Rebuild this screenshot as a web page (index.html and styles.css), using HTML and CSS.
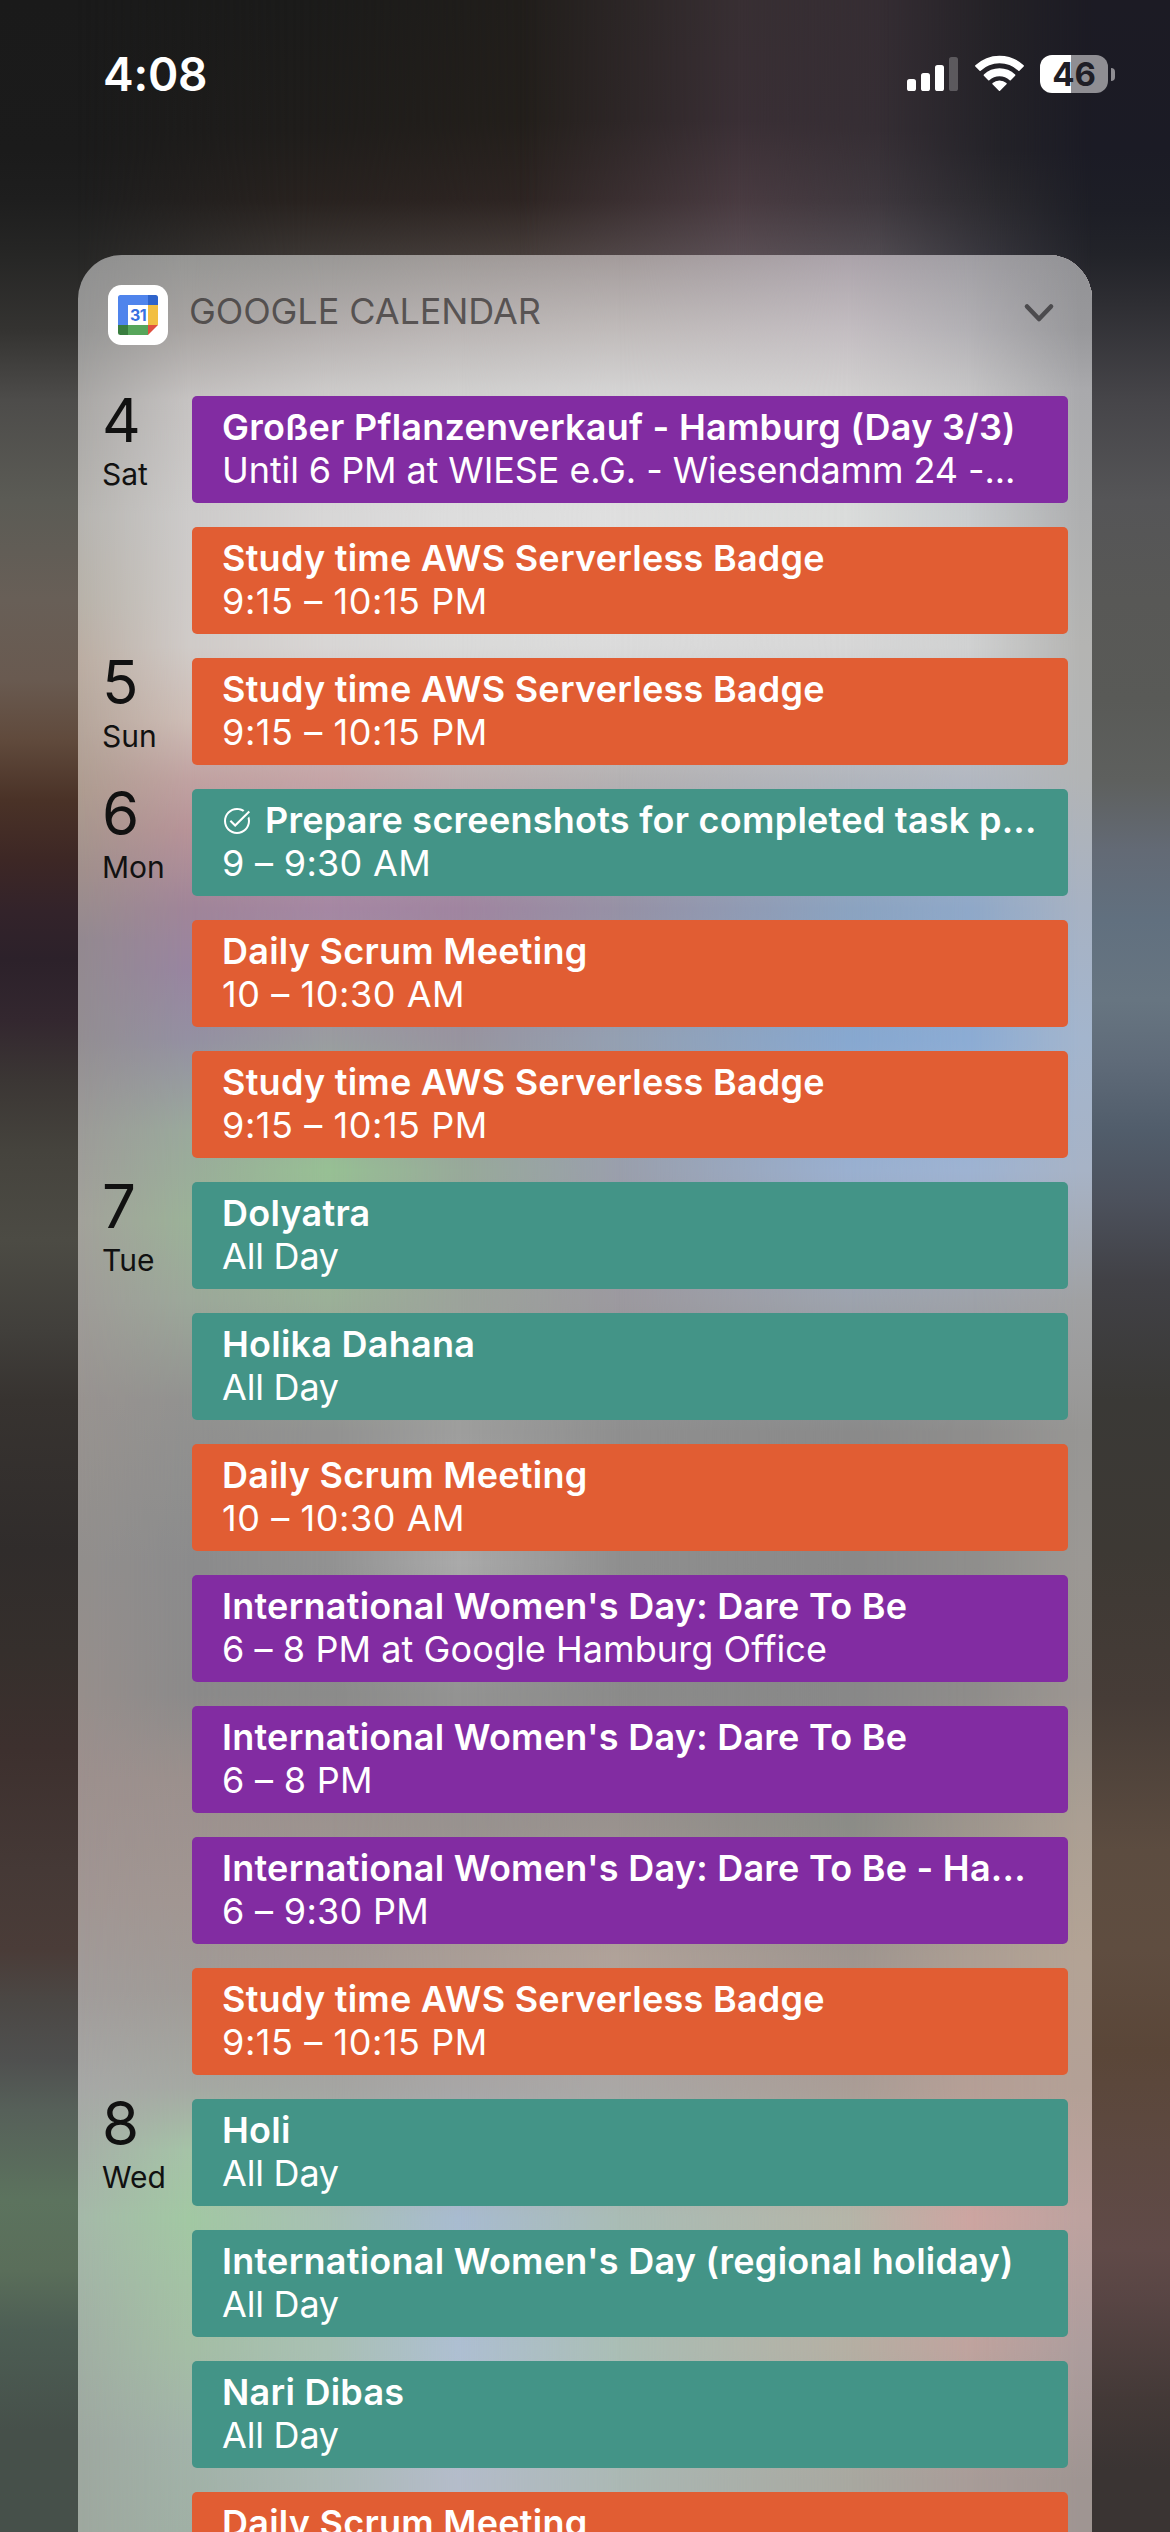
FILE: index.html
```html
<!DOCTYPE html>
<html lang="en">
<head>
<meta charset="utf-8">
<title>Google Calendar widget</title>
<link rel="stylesheet" href="styles.css">
</head>
<body>
<div class="screen">
  <div class="wash" aria-hidden="true">
    <i class="w0"></i><i class="w1"></i><i class="w2"></i><i class="w3"></i><i class="w4"></i><i class="w5"></i><i class="w6"></i>
  </div>

  <header class="status">
    <span class="clock">4:08</span>
    <div class="indicators">
      <svg class="signal" width="51" height="34" viewBox="0 0 51 34" fill="#fff">
        <rect x="0" y="22" width="9" height="12" rx="2.6"/>
        <rect x="14" y="16" width="9" height="18" rx="2.6"/>
        <rect x="28" y="8" width="9" height="26" rx="2.6"/>
        <rect x="42" y="0" width="9" height="34" rx="2.6" opacity=".24"/>
      </svg>
      <svg class="wifi" width="49" height="36" viewBox="0 0 49 36" fill="#fff" stroke="#fff" stroke-linejoin="round" stroke-width="1.6">
        <path d="M.9 10.9A34.2 34.2 0 0 1 48.1 10.9L43.9 15.2A28.2 28.2 0 0 0 5.1 15.2Z"/>
        <path d="M9.4 20.2A21.8 21.8 0 0 1 39.6 20.2L35.2 24.6A15.6 15.6 0 0 0 13.8 24.6Z"/>
        <path d="M18.1 28.7A9.6 9.6 0 0 1 30.9 28.7L24.5 35.2Z"/>
      </svg>
      <div class="battery"><span class="cell">46</span><span class="nub"></span></div>
    </div>
  </header>

  <main class="widget">
    <div class="wash panel-wash" aria-hidden="true">
      <i class="p0"></i><i class="p1"></i><i class="p2"></i><i class="p3"></i><i class="p4"></i><i class="p5"></i><i class="p6"></i><i class="p7"></i>
    </div>
    <div class="widget-head">
      <svg class="app-icon" width="60" height="60" viewBox="0 0 60 60">
        <rect width="60" height="60" rx="13.5" fill="#fff"/>
        <path d="M10 40V12.500Q10 10 12.500 10H40V20H20V40Z" fill="#4f84ec"/>
        <path d="M40 10H47.500Q50 10 50 12.500V20H40Z" fill="#2f64cb"/>
        <path d="M40 20H50V40H40Z" fill="#f2bf42"/>
        <path d="M20 40H40V50H20Z" fill="#57a65b"/>
        <path d="M10 40H20V50H12.500Q10 50 10 47.500Z" fill="#397e3f"/>
        <path d="M40 40H50L40 50Z" fill="#df4f3f"/>
        <text x="30" y="35.800" text-anchor="middle" class="icon-date">31</text>
      </svg>
      <h1>GOOGLE CALENDAR</h1>
      <svg class="chevron" width="32" height="22" viewBox="0 0 32 22"><path d="M4 4.500L16 17L28 4.500"/></svg>
    </div>

    <section class="day">
      <div class="date"><b>4</b><span>Sat</span></div>
      <ul>
        <li class="purple"><h2>Großer Pflanzenverkauf - Hamburg (Day 3/3)</h2><p class="place">Until 6 PM at WIESE e.G. - Wiesendamm 24 -...</p></li>
        <li class="orange"><h2>Study time AWS Serverless Badge</h2><p class="range">9:15 – 10:15 PM</p></li>
      </ul>
    </section>
    <section class="day">
      <div class="date"><b>5</b><span>Sun</span></div>
      <ul>
        <li class="orange"><h2>Study time AWS Serverless Badge</h2><p class="range">9:15 – 10:15 PM</p></li>
      </ul>
    </section>
    <section class="day">
      <div class="date"><b>6</b><span>Mon</span></div>
      <ul>
        <li class="teal">
          <h2 class="task"><svg width="26" height="26" viewBox="2 2 20 20"><path fill="#fff" d="M22 5.180 10.590 16.600l-4.240-4.240 1.100-1.100 3.140 3.140 10.300-10.300zM20.130 9.870c.2.680.32 1.390.32 2.130 0 4.670-3.780 8.450-8.450 8.450s-8.450-3.780-8.450-8.450 3.780-8.450 8.450-8.450c1.700 0 3.280.5 4.600 1.360l1.120-1.100C16.100 2.670 14.130 2 12 2 6.480 2 2 6.480 2 12s4.480 10 10 10 10-4.480 10-10c0-1.190-.22-2.330-.6-3.390z"/></svg>Prepare screenshots for completed task p...</h2>
          <p class="time">9 – 9:30 AM</p>
        </li>
        <li class="orange"><h2>Daily Scrum Meeting</h2><p class="range">10 – 10:30 AM</p></li>
        <li class="orange"><h2>Study time AWS Serverless Badge</h2><p class="range">9:15 – 10:15 PM</p></li>
      </ul>
    </section>
    <section class="day">
      <div class="date"><b>7</b><span>Tue</span></div>
      <ul>
        <li class="teal"><h2>Dolyatra</h2><p class="all-day">All Day</p></li>
        <li class="teal"><h2>Holika Dahana</h2><p class="all-day">All Day</p></li>
        <li class="orange"><h2>Daily Scrum Meeting</h2><p class="range">10 – 10:30 AM</p></li>
        <li class="purple"><h2>International Women's Day: Dare To Be</h2><p>6 – 8 PM at Google Hamburg Office</p></li>
        <li class="purple"><h2>International Women's Day: Dare To Be</h2><p class="time">6 – 8 PM</p></li>
        <li class="purple"><h2>International Women's Day: Dare To Be - Ha...</h2><p class="time">6 – 9:30 PM</p></li>
        <li class="orange"><h2>Study time AWS Serverless Badge</h2><p class="range">9:15 – 10:15 PM</p></li>
      </ul>
    </section>
    <section class="day">
      <div class="date"><b>8</b><span>Wed</span></div>
      <ul>
        <li class="teal"><h2>Holi</h2><p class="all-day">All Day</p></li>
        <li class="teal"><h2>International Women's Day (regional holiday)</h2><p class="all-day">All Day</p></li>
        <li class="teal"><h2>Nari Dibas</h2><p class="all-day">All Day</p></li>
        <li class="orange"><h2>Daily Scrum Meeting</h2></li>
      </ul>
    </section>
  </main>
</div>
</body>
</html>
```
FILE: styles.css
```css
* { box-sizing: border-box; margin: 0; padding: 0; }

html, body { width: 1170px; height: 2532px; overflow: hidden; }

body { font-family: Inter, "Liberation Sans", sans-serif; background: #1a1a1a; }

.screen { position: relative; width: 1170px; height: 2532px; overflow: hidden; isolation: isolate; }

/* Blurred wallpaper: vertical gradients cross-faded from left to right. */
.wash { position: absolute; inset: 0; z-index: -1; display: grid; }
.wash i { grid-area: 1 / 1; -webkit-mask-image: linear-gradient(to right, transparent var(--from), #000 var(--to)); mask-image: linear-gradient(to right, transparent var(--from), #000 var(--to)); }
.wash .w0, .wash .p0 { -webkit-mask-image: none; mask-image: none; }

.w0 { background: linear-gradient(#1a1a1a 0, #1b1b1b 150px, #1e1e1e 200px, #262625 255px, #343331 330px, #4d4c4a 400px, #5b5b55 500px, #685f57 600px, #695a50 680px, #604a3c 740px, #4a3227 800px, #3d2725 860px, #33232a 910px, #2c212a 960px, #33272f 1020px, #3b3634 1080px, #45433d 1150px, #4c4b44 1240px, #413f3b 1330px, #373330 1400px, #302c2b 1550px, #352f2c 1650px, #3d302e 1750px, #453936 1870px, #4a3c38 1950px, #4b4744 2000px, #4f504f 2060px, #566059 2110px, #5c735e 2200px, #5a6e5a 2270px, #4d5e54 2330px, #46504a 2430px, #46504a 2532px); }
.w1 { --from: 78px; --to: 300px; background: linear-gradient(#1b1b1a 0, #1f1d1b 130px, #28221f 200px, #3b3633 255px, #3b3633); }
.w2 { --from: 300px; --to: 540px; background: linear-gradient(#211e1b 0, #231f1b 120px, #2e2523 200px, #473e3b 255px, #473e3b); }
.w3 { --from: 520px; --to: 740px; background: linear-gradient(#382f33 0, #3a2f35 120px, #493b41 200px, #5a4e54 255px, #5a4e54); }
.w4 { --from: 740px; --to: 890px; background: linear-gradient(#352d33 0, #352e34 130px, #3d373d 200px, #4f4a50 255px, #4f4a50); }
.w5 { --from: 880px; --to: 1000px; background: linear-gradient(#232126 0, #232228 150px, #2a292e 200px, #34333a 255px, #34333a); }
.w6 { --from: 1000px; --to: 1092px; background: linear-gradient(#1c1b24 0, #1b1b25 150px, #1d1e26 210px, #222329 255px, #2d2d32 300px, #464549 400px, #555557 500px, #585856 600px, #595a57 700px, #5e605e 780px, #636a75 850px, #61707f 920px, #677581 1000px, #5f6b79 1060px, #515d6b 1130px, #4c515c 1200px, #414146 1280px, #3a3936 1400px, #3d3934 1550px, #463c37 1700px, #5c4c40 1850px, #5f4d40 1950px, #5a4638 2050px, #5d4941 2150px, #604a48 2250px, #584544 2300px, #433937 2400px, #3a3433 2470px, #3a3433); }

.status { display: flex; justify-content: space-between; align-items: center; height: 148px; padding: 0 55px 0 103px; }
.clock { color: #fff; font-size: 46px; font-weight: 600; letter-spacing: -.2px; }
.indicators { display: flex; align-items: flex-start; height: 38px; }
.signal { margin-top: 2px; }
.wifi { margin-left: 16.500px; }
.battery { display: flex; align-items: center; gap: 3px; margin-left: 16.500px; }
.cell { width: 68px; height: 38px; border-radius: 12px; background: linear-gradient(to right, #fff 31px, #8f8e93 31px); color: #1f1e26; font-size: 33px; line-height: 38px; font-weight: 700; text-align: center; }
.nub { width: 4px; height: 13px; border-radius: 0 5px 5px 0; background: #8f8e93; }

.widget { position: relative; isolation: isolate; width: 1014px; height: 2400px; margin: 107px 0 0 78px; border-radius: 44px 44px 0 0; overflow: hidden; }
.panel-wash { inset: auto; top: -255px; left: -78px; width: 1170px; height: 2532px; }

.p0 { background: linear-gradient(#8f8f8f 255px, #979796 330px, #a9a7a5 400px, #b6b4b0 515px, #b8b2a9 600px, #bbada2 660px, #b5a59a 730px, #ae9c90 790px, #a1908c 870px, #938990 940px, #938e92 1039px, #9c9b98 1130px, #a3a29b 1220px, #9f9c98 1301px, #989390 1400px, #928f8d 1563px, #978f8c 1694px, #9d908e 1780px, #a19693 1900px, #a19c9a 1990px, #a7a8a6 2087px, #a5b9a9 2218px, #a1afa4 2349px, #9ea8a0 2440px, #9ea89f 2532px); }
.p1 { --from: 78px; --to: 190px; background: linear-gradient(#969694 255px, #a9a5a3 330px, #c6c3c2 400px, #cdcbca 515px, #d0cbc8 646px, #cebdb6 720px, #c1a3a2 777px, #b79398 830px, #a08599 908px, #9885a0 970px, #9490a2 1039px, #9aa99c 1130px, #9bb298 1220px, #9ca89a 1301px, #929290 1400px, #8b8b8c 1563px, #8b8a8a 1694px, #9b908d 1780px, #a19692 1900px, #a09b97 1990px, #a5a9a3 2087px, #a5c3a7 2150px, #a2c8a3 2218px, #a4bea5 2349px, #a2b3a9 2440px, #a0b0a5 2532px); }
.p2 { --from: 190px; --to: 330px; background: linear-gradient(#9a9896 255px, #b4afae 330px, #cccac9 390px, #d8d7d7 515px, #d8d6d5 646px, #c5a5a7 777px, #a587a3 908px, #9a9ca0 1039px, #97c094 1170px, #9bb098 1301px, #929291 1432px, #929292 1563px, #8b8b8a 1694px, #9c938f 1825px, #a39994 1956px, #a5a5a2 2087px, #a7c0b4 2218px, #a9c0b4 2349px, #abb9b6 2480px, #abb8b6); }
.p3 { --from: 330px; --to: 460px; background: linear-gradient(#9f9a98 255px, #bbb6b5 330px, #d0cfce 390px, #dddddd 515px, #dadad9 646px, #bdafb0 777px, #a085a0 908px, #98949f 1039px, #98aa9a 1170px, #9ca39b 1301px, #9e9e9d 1432px, #aaaaaa 1563px, #939392 1694px, #98928f 1825px, #a99d96 1956px, #a8a6a6 2087px, #a8bbd0 2218px, #aebfd2 2349px, #b4bcca 2480px, #b4bcca); }
.p4 { --from: 460px; --to: 618px; background: linear-gradient(#a39b9b 255px, #c0bbba 330px, #d4d3d3 390px, #dfdfdf 515px, #dbdbdb 646px, #b5b2b3 777px, #9691a5 908px, #94a0b2 1039px, #9a9fac 1170px, #9c999f 1301px, #8f8f8f 1432px, #8f8f8f 1563px, #8b8b8a 1694px, #99928e 1825px, #b0a299 1956px, #aaa7a5 2087px, #a9bcb5 2218px, #aabeb5 2349px, #abb8b4 2480px, #abb8b4); }
.p5 { --from: 618px; --to: 850px; background: linear-gradient(#aba3aa 255px, #c3bdc1 330px, #d2d0d0 390px, #dadcdb 515px, #d7d7d7 646px, #b2b6bd 777px, #8ba3c0 908px, #87a8d0 1039px, #9ab0d0 1170px, #9da3ad 1301px, #8a8a8a 1432px, #898989 1563px, #888888 1694px, #8b8c87 1825px, #9e958f 1956px, #aa9d96 2087px, #b5b5a8 2218px, #b5afa3 2349px, #a8a8a0 2480px, #a8a8a0); }
.p6 { --from: 850px; --to: 970px; background: linear-gradient(#a09ea3 255px, #b2b0b4 330px, #c5c4c5 390px, #c9ccce 515px, #d0d1d1 646px, #b3b8c1 777px, #8fa8c8 908px, #8cacd4 1039px, #9eb3d2 1170px, #9ea2a9 1301px, #8e8d8c 1432px, #8f8e8c 1563px, #8e8c8a 1694px, #9d958d 1825px, #ac9e93 1956px, #b59f96 2087px, #cda5a1 2218px, #bfa39e 2349px, #a89c98 2480px, #a89c98); }
.p7 { --from: 970px; --to: 1080px; background: linear-gradient(#929295 255px, #98989b 330px, #a9a9ac 390px, #aeafb0 515px, #b4b4b2 646px, #b2b4b5 777px, #a7b2c3 908px, #a3b5cd 1039px, #a7b3c6 1170px, #a0a1a3 1301px, #979694 1432px, #9b9894 1563px, #9c9691 1694px, #ab9f93 1825px, #b3a395 1956px, #b3a096 2087px, #bda29f 2218px, #ad9d9d 2349px, #9f9592 2480px, #9f9592); }

.widget-head { display: flex; align-items: flex-start; height: 141px; padding: 30px 37px 0 30px; }
.icon-date { font-size: 16px; font-weight: 700; letter-spacing: -.5px; fill: #3871e0; }
h1 { flex: 1; margin: 4px 0 0 21px; font-size: 36px; line-height: 44px; font-weight: 400; letter-spacing: -.1px; color: rgba(40, 36, 36, .66); }
.chevron { margin-top: 17px; fill: none; stroke: #4c4b4e; stroke-width: 4.600; stroke-linecap: round; stroke-linejoin: round; }

.day { display: grid; grid-template-columns: 90px 876px; padding-left: 24px; margin-bottom: 24px; }
.date { display: flex; flex-direction: column; margin-top: -6px; height: 107px; color: #111; }
.date b { font-size: 60px; line-height: 60px; font-weight: 400; letter-spacing: -1px; }
.date span { margin-top: 6px; font-size: 30px; line-height: 36px; }

ul { display: flex; flex-direction: column; gap: 24px; list-style: none; }
li { height: 107px; padding: 10px 30px 0; border-radius: 5px; color: #fff; white-space: nowrap; overflow: hidden; }
.purple { background: #822ca2; }
.orange { background: #e15d33; }
.teal { background: #439487; }
h2 { font-size: 36px; line-height: 43px; font-weight: 600; letter-spacing: .25px; }
li p { font-size: 36px; line-height: 43px; font-weight: 400; letter-spacing: .07px; }
li .place { letter-spacing: -.09px; }
li .range { letter-spacing: .57px; }
li .time { letter-spacing: .3px; }
li .all-day { letter-spacing: -.2px; }
.task { display: flex; align-items: center; gap: 15px; padding-left: 2px; }
```
